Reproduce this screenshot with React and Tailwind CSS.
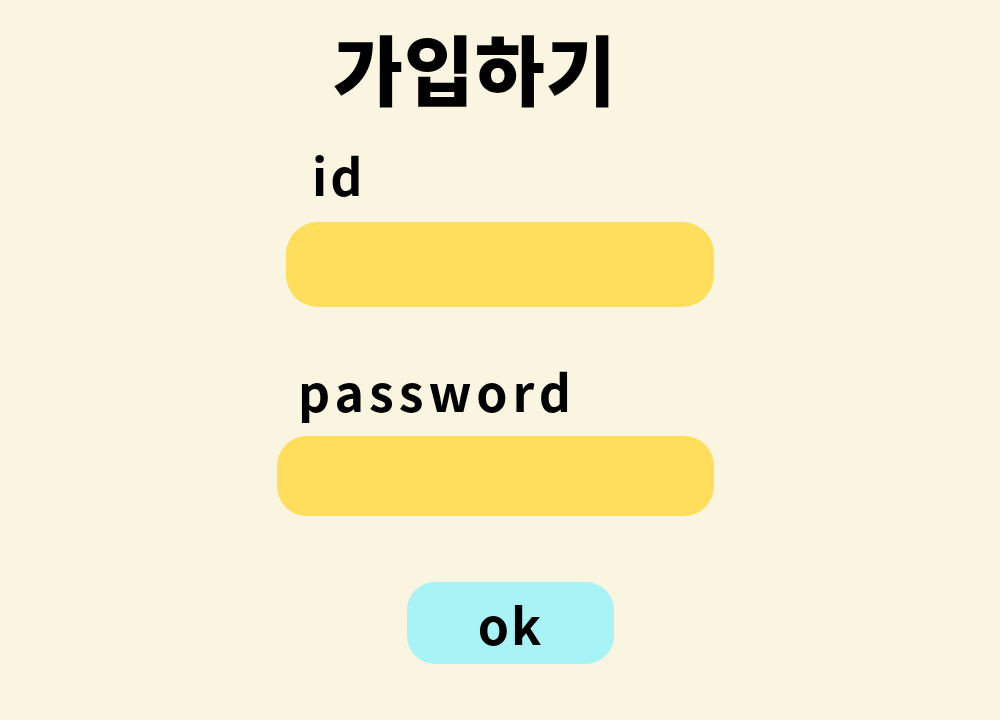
export default function App() {
    const font = {fontFamily: '"Noto Sans CJK KR", "Noto Sans", sans-serif'};
    return (
        <div className="w-[1000px] h-[720px] bg-[#faf5e0] overflow-hidden" style={font}>
            <div className="flex flex-col items-start">
                {/* title */}
                <h1 className="ml-[333px] mt-[29px] text-[76px] leading-none font-black tracking-[1px] text-black">
                    가입하기
                </h1>

                {/* id */}
                <label className="ml-[312px] mt-[44px] text-[50px] leading-none font-semibold tracking-[3px] text-black">
                    id
                </label>
                <input className="ml-[286px] mt-[23px] w-[428px] h-[85px] rounded-[32px] bg-[#ffde5b] outline-none"/>

                {/* password */}
                <label className="ml-[298px] mt-[58px] text-[50px] leading-none font-semibold tracking-[5px] text-black">
                    password
                </label>
                <input type="password" className="ml-[277px] mt-[21px] w-[437px] h-[80px] rounded-[30px] bg-[#ffde5b] outline-none"/>

                {/* ok */}
                <button className="ml-[407px] mt-[66px] w-[207px] h-[82px] rounded-[28px] bg-[#a8f3f5] text-[50px] leading-none font-semibold tracking-[2px] text-black">
                    ok
                </button>
            </div>
        </div>
    );
}
